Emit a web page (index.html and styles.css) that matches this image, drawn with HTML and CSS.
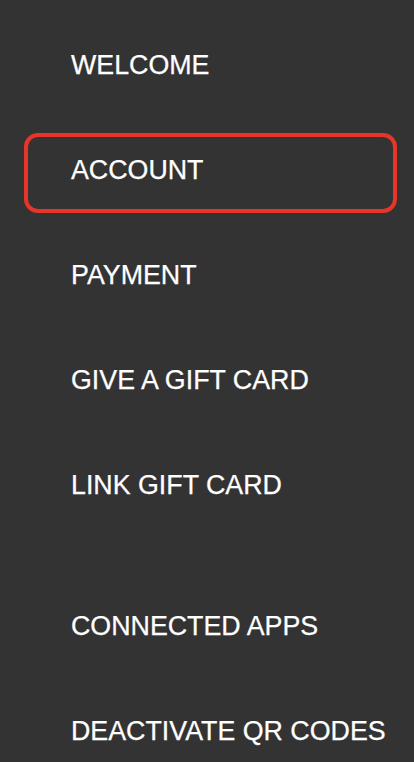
FILE: index.html
```html
<!DOCTYPE html>
<html lang="en">
<head>
<meta charset="utf-8">
<meta name="viewport" content="width=device-width, initial-scale=1">
<title>Menu</title>
<link rel="stylesheet" href="styles.css">
</head>
<body>
<nav class="menu">
  <ul class="menu-group">
    <li><a class="menu-item" href="#">WELCOME</a></li>
    <li><a class="menu-item is-active" href="#">ACCOUNT</a></li>
    <li><a class="menu-item" href="#">PAYMENT</a></li>
    <li><a class="menu-item" href="#">GIVE A GIFT CARD</a></li>
    <li><a class="menu-item" href="#">LINK GIFT CARD</a></li>
  </ul>
  <ul class="menu-group">
    <li><a class="menu-item" href="#">CONNECTED APPS</a></li>
    <li><a class="menu-item" href="#">DEACTIVATE QR CODES</a></li>
  </ul>
</nav>
</body>
</html>
```
FILE: styles.css
```css
html, body {
  margin: 0;
  padding: 0;
  background: #333333;
}

body {
  height: 762px;
  overflow: hidden;
  font-family: "Liberation Sans", Arial, Helvetica, sans-serif;
}

.menu {
  display: flex;
  flex-direction: column;
  gap: 61px;
  padding: 28px 17px 0 24px;
}

.menu-group {
  list-style: none;
  margin: 0;
  padding: 0;
  display: flex;
  flex-direction: column;
  gap: 25px;
}

.menu-item {
  display: block;
  box-sizing: border-box;
  height: 80px;
  padding: 18px 0 0 43px;
  border: 4px solid transparent;
  border-radius: 14px;
  color: #ffffff;
  text-decoration: none;
  font-size: 26.8px;
  line-height: 30px;
  white-space: nowrap;
  -webkit-text-stroke: 0.25px #ffffff;
}

.menu-item.is-active {
  border-color: #e8352a;
}
```
